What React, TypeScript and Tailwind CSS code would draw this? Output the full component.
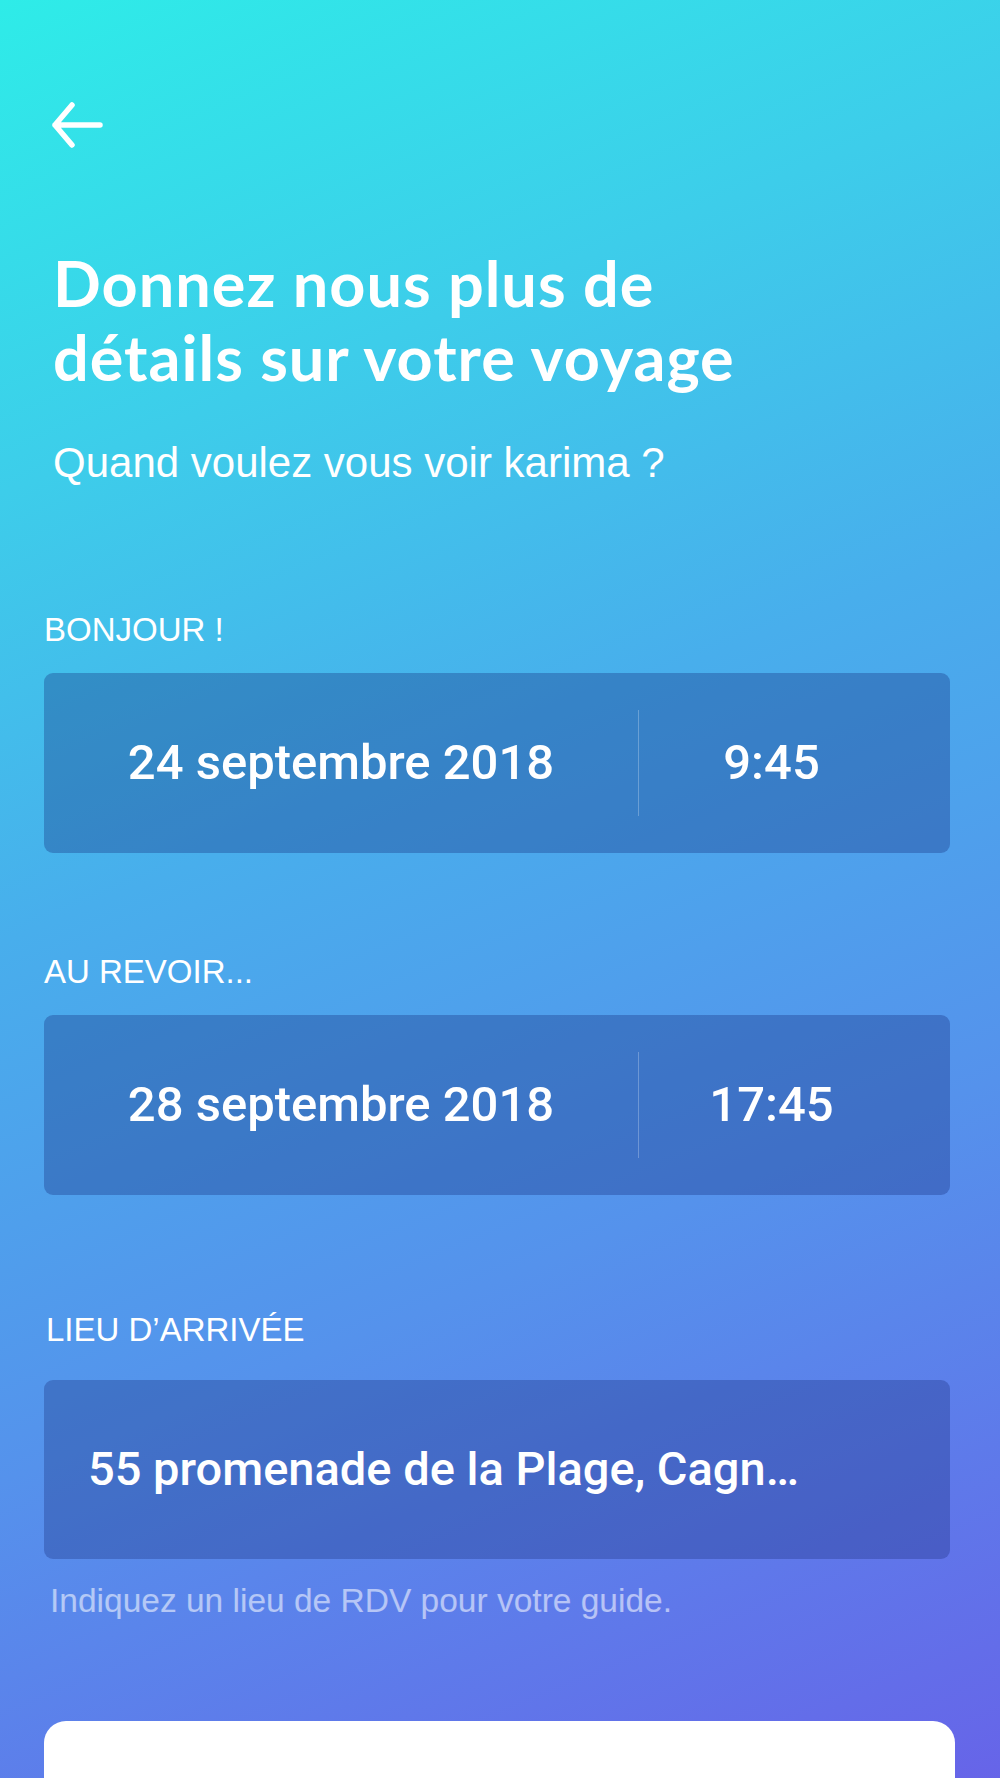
import { ReactNode } from 'react';

function BackArrow() {
  return (
    <svg width="54" height="46" viewBox="0 0 54 46" fill="none" className="block">
      <path
        d="M5 23 H50 M22 3 L5 23 L22 43"
        stroke="white"
        strokeWidth="5.5"
        strokeLinecap="round"
        strokeLinejoin="round"
      />
    </svg>
  );
}

function Label({ children }: { children: ReactNode }) {
  return (
    <div className="text-[33px] leading-[40px] text-white font-['Liberation_Sans',Arial,sans-serif]">
      {children}
    </div>
  );
}

function DateCard({ date, time }: { date: string; time: string }) {
  return (
    <div className="flex h-[180px] w-full rounded-[9px] bg-[rgba(20,40,120,0.32)] text-white">
      <div className="flex w-[594px] items-center justify-center">
        <span className="text-[49px] font-medium font-['Roboto',Arial,sans-serif]">{date}</span>
      </div>
      <div className="my-[37px] w-px bg-white/25" />
      <div className="flex flex-1 items-center justify-center pr-[46px]">
        <span className="text-[49px] font-medium font-['Roboto',Arial,sans-serif]">{time}</span>
      </div>
    </div>
  );
}

export default function App() {
  return (
    <div className="min-h-[1778px] w-full overflow-hidden bg-[linear-gradient(158deg,#2eece8_0%,#3dcdea_22%,#48aeec_42%,#5592ec_66%,#6860e8_100%)] pl-[44px] pr-[50px]">
      {/* header */}
      <div className="pt-[102px] pl-[6px]">
        <BackArrow />
      </div>

      <h1 className="mt-[98px] pl-[9px] text-[63px] leading-[74px] font-bold text-white font-['Lato',sans-serif] tracking-[1px]">
        Donnez nous plus de
        <br />
        détails sur votre voyage
      </h1>

      <p className="mt-[45px] pl-[9px] text-[42px] leading-[48px] text-white font-['Liberation_Sans',Arial,sans-serif]">
        Quand voulez vous voir karima ?
      </p>

      {/* arrivée */}
      <div className="mt-[123px]">
        <Label>BONJOUR !</Label>
        <div className="mt-[23px]">
          <DateCard date="24 septembre 2018" time="9:45" />
        </div>
      </div>

      {/* départ */}
      <div className="mt-[99px]">
        <Label>AU REVOIR...</Label>
        <div className="mt-[23px]">
          <DateCard date="28 septembre 2018" time="17:45" />
        </div>
      </div>

      {/* lieu */}
      <div className="mt-[115px]">
        <div className="pl-[2px]">
          <Label>LIEU D’ARRIVÉE</Label>
        </div>
        <div className="mt-[30px] flex h-[179px] items-center rounded-[9px] bg-[rgba(20,40,115,0.3)] px-[44px]">
          <span className="text-[47px] font-medium text-white font-['Roboto',Arial,sans-serif]">
            55 promenade de la Plage, Cagn…
          </span>
        </div>
        <p className="mt-[22px] pl-[6px] text-[33.5px] leading-[40px] text-white/55 font-['Liberation_Sans',Arial,sans-serif]">
          Indiquez un lieu de RDV pour votre guide.
        </p>
      </div>

      {/* bouton */}
      <div className="mt-[100px] -mr-[5px] h-[120px] rounded-t-[22px] bg-white" />
    </div>
  );
}
